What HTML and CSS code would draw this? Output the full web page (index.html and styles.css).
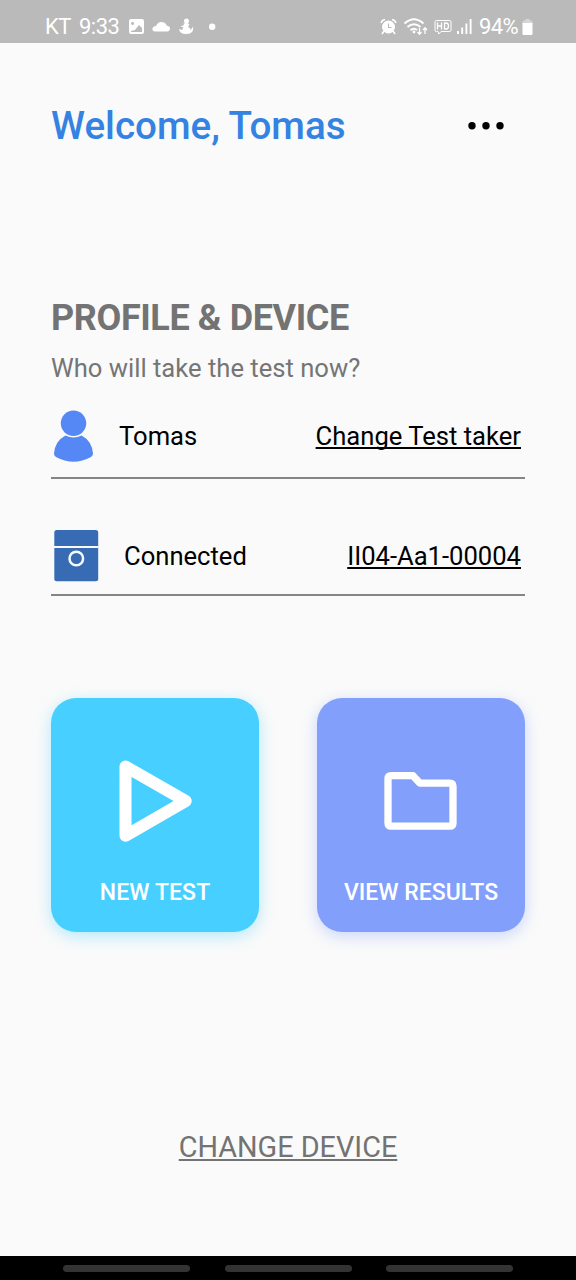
FILE: index.html
```html
<!DOCTYPE html>
<html lang="en">
<head>
<meta charset="utf-8">
<title>Profile and device</title>
<link rel="stylesheet" href="styles.css">
</head>
<body>
<div class="screen">
  <div class="status">
    <span class="carrier">KT</span>
    <span class="clock">9:33</span>
    <svg class="notifications" width="100" height="24" viewBox="128 14 100 24" fill="#fff">
      <path fill-rule="evenodd" d="M131 19h11q2 0 2 2v11q0 2-2 2h-11q-2 0-2-2V21q0-2 2-2zM131 31l4-1 4-5 3 3v4h-11zM132.500 22a1.500 1.500 0 1 0 .1 0z"/>
      <path d="M155 31.500q-3-.5-2.500-3t3.500-2.500q2-4.500 6-4t4.500 3.500q3.500.500 3.500 3t-3 3z"/>
      <circle cx="186.500" cy="21" r="2.500"/>
      <path d="M183.500 23.500q4.500-1.500 6 1l-1.500 2.500q2.500 1 3 3l1.500-3 .8 1q0 6-7.300 6-6.500 0-7-5l3 1 1.500-2.500-3-1 3.500-1.500z"/>
      <circle cx="212.200" cy="26.700" r="3.200"/>
    </svg>
    <svg class="indicators" width="95" height="24" viewBox="379 14 95 24" fill="none" stroke="#fff">
      <circle cx="388.500" cy="27" r="6.500" fill="#fff" stroke="none"/>
      <path d="M381 23q1-3 4-3.500M392 19.500q3 .5 4 3.500M384 31l-2 3M393 31l2 3" stroke-width="1.600"/>
      <path d="M388.500 23.500v4h3" stroke="#bababa" stroke-width="1.100"/>
      <path d="M404.500 23.500q9.500-8.500 19 0M407.500 27q6.500-5.500 13 0M410.500 30.300q3.500-3 6.500-.3" stroke-width="2"/>
      <circle cx="414" cy="32" r="1.400" fill="#fff" stroke="none"/>
      <path d="M419.500 28v6m-2-2l2 2.200 2-2.200M425 34v-6m-2 2l2-2.200 2 2.200" stroke-width="1.300"/>
      <path d="M436.500 20.500h13q1.500 0 1.500 1.500v8q0 1.500-1.500 1.500H441l-2 2.500-1-2.500h-1.500q-1.500 0-1.500-1.500v-8q0-1.500 1.500-1.500z" stroke-width="1"/>
      <path d="M437.500 22.500v7m4-7v7m-4-3.500h4M444.500 23v6h1.500q2.500 0 2.500-3t-2.500-3z" stroke-width="1.300"/>
      <path d="M458 31v3M462.200 27.500V34M466.400 23.500V34M470.600 19V34" stroke-width="1.900"/>
    </svg>
    <span class="percent">94%</span>
    <svg class="battery" width="11" height="18" viewBox="0 0 11 18">
      <path d="M3.500 1h4v1.500H9q1.500 0 1.500 1.500v2H.5V4q0-1.500 1.500-1.500h1.500z" fill="#d6d6d6"/>
      <path d="M.5 5h10v11q0 1-1 1h-8q-1 0-1-1z" fill="#fff"/>
    </svg>
  </div>

  <header class="header">
    <h1 class="welcome">Welcome, Tomas</h1>
    <svg class="more" width="38" height="10" viewBox="0 0 38 10">
      <circle cx="5" cy="4.700" r="3.700"/><circle cx="19" cy="4.700" r="3.700"/><circle cx="33" cy="4.700" r="3.700"/>
    </svg>
  </header>

  <main class="main">
    <h2 class="section-title">PROFILE &amp; DEVICE</h2>
    <p class="question">Who will take the test now?</p>
    <div class="row row-person">
      <svg class="person" width="44" height="54" viewBox="51 409 44 54" fill="#5588f4">
        <circle cx="73.500" cy="423.300" r="12.700"/>
        <path d="M65.500 435.500q8 4 16 0Q92 441 93 453.500q.2 2-2 3.400-17.500 9.500-35 0-2.200-1.400-2-3.400Q55 441 65.500 435.500z"/>
      </svg>
      <span class="row-name">Tomas</span>
      <a class="row-link">Change Test taker</a>
    </div>
    <div class="row row-device">
      <svg class="device" width="49" height="54" viewBox="51 529 49 54">
        <rect x="54.300" y="530" width="43.900" height="51.200" rx="2.500" fill="#376bb4"/>
        <path d="M54 547h44.500" stroke="#fafafa" stroke-width="2"/>
        <circle cx="76.300" cy="558.500" r="6.800" fill="none" stroke="#f5fbff" stroke-width="2.500"/>
      </svg>
      <span class="row-name">Connected</span>
      <a class="row-link">II04-Aa1-00004</a>
    </div>
    <div class="cards">
      <div class="card card-test">
        <svg width="100" height="100" viewBox="105 751 100 100">
          <path d="M125.500 766.500v69.200L185.700 801z" fill="none" stroke="#fff" stroke-width="12" stroke-linejoin="round"/>
        </svg>
        <span class="card-label label-test">NEW TEST</span>
      </div>
      <div class="card card-results">
        <svg width="100" height="100" viewBox="371 751 100 100">
          <path d="M391.200 775.700h21.800l7 7.500h29.800q3.200 0 3.200 3.200v36.600q0 3.200-3.200 3.200h-58.600q-3.200 0-3.200-3.200v-44.100q0-3.200 3.200-3.200z" fill="none" stroke="#fff" stroke-width="7.300" stroke-linejoin="round"/>
        </svg>
        <span class="card-label">VIEW RESULTS</span>
      </div>
    </div>
    <a class="change-device">CHANGE DEVICE</a>
  </main>

  <div class="navbar"><span class="pill"></span><span class="pill"></span><span class="pill"></span></div>
</div>
</body>
</html>
```
FILE: styles.css
```css
* { box-sizing: border-box; }
body { margin: 0; font-family: Roboto, sans-serif; background: #fafafa; }
h1, h2, p { margin: 0; }
.screen { width: 576px; height: 1280px; display: flex; flex-direction: column; overflow: hidden; }
svg { flex: none; display: block; }

.status { height: 43px; flex: none; padding: 12px 0 0 45px; display: flex; background: #bababa; color: #fff; font-size: 22px; line-height: 30px; white-space: nowrap; }
.carrier { width: 34px; letter-spacing: -0.5px; }
.clock { width: 49px; letter-spacing: -0.5px; }
.notifications { margin-top: 2px; }
.indicators { margin: 2px 0 0 151px; }
.percent { width: 41px; margin-left: 5px; letter-spacing: -0.6px; }
.battery { margin: 6px 0 0 2px; }

.header { height: 165px; flex: none; padding: 0 71px 0 51px; display: flex; align-items: center; justify-content: space-between; }
.welcome { color: #3482e2; font-size: 38.6px; font-weight: 500; line-height: 46px; white-space: nowrap; }

.main { flex: 1; padding: 89px 51px 0; display: flex; flex-direction: column; }
.section-title { color: #737373; font-size: 36px; font-weight: 700; line-height: 42px; letter-spacing: -0.4px; white-space: nowrap; }
.question { margin-top: 13px; color: #757575; font-size: 25.6px; line-height: 32px; white-space: nowrap; }
.row { display: flex; border-bottom: 2px solid #858585; color: #000; font-size: 25.6px; line-height: 32px; white-space: nowrap; }
.row-person { height: 70px; margin-top: 25px; }
.row-device { height: 67px; margin-top: 50px; }
.row-name { margin: 11px 0 0 24px; }
.row-link { margin: 11px 4px 0 auto; text-decoration: underline; text-decoration-thickness: 1.5px; text-underline-offset: 2px; text-decoration-skip-ink: none; }

.cards { margin-top: 102px; display: flex; justify-content: space-between; }
.card { width: 208px; height: 233.5px; padding-top: 53px; border-radius: 25px; display: flex; flex-direction: column; align-items: center; }
.card-test { background: #47d0ff; box-shadow: 0 4px 16px rgba(71, 208, 255, 0.4); }
.card-results { background: #839ffc; box-shadow: 0 4px 16px rgba(131, 159, 252, 0.4); }
.card-label { margin-top: 27px; color: #fff; font-size: 23px; font-weight: 500; line-height: 30px; white-space: nowrap; }
.label-test { letter-spacing: 0.1px; }
.change-device { align-self: center; margin-top: 197.5px; color: #737373; font-size: 28.8px; line-height: 36px; text-decoration: underline; text-decoration-thickness: 1.5px; text-underline-offset: 2px; white-space: nowrap; }

.navbar { height: 24px; flex: none; padding: 9px 63px 0; background: #000; display: flex; justify-content: space-between; }
.pill { width: 127px; height: 7px; border-radius: 4px; background: #333; }
```
